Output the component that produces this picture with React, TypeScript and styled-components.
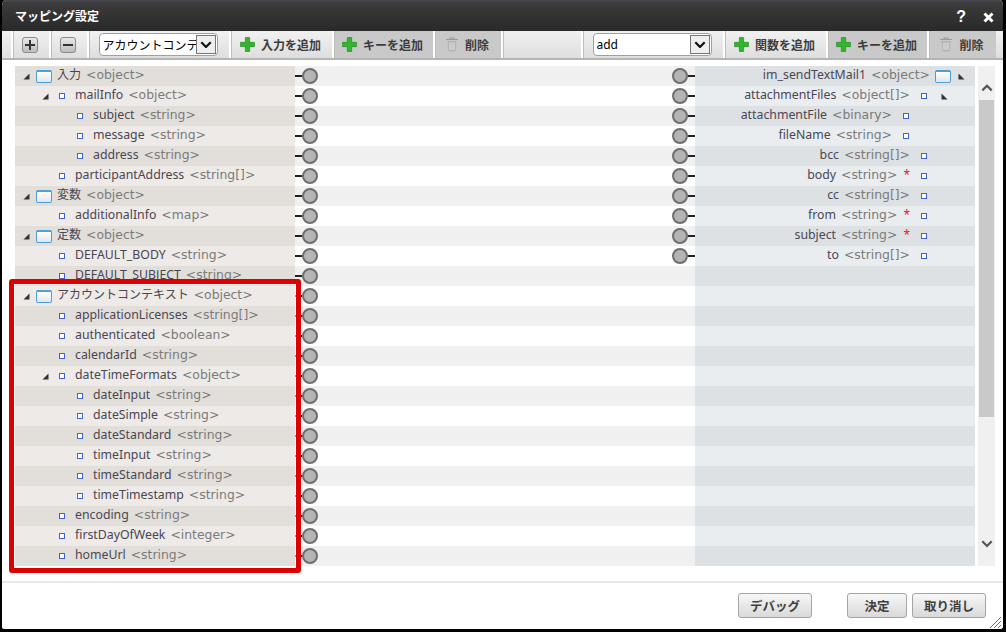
import React from "react";
import styled, { createGlobalStyle } from "styled-components";

const Global = createGlobalStyle`
  html, body { margin: 0; padding: 0; background: #000; }
  * { box-sizing: border-box; }
`;
const FONT = `"Noto Sans", "Noto Sans CJK JP", sans-serif`;

const Win = styled.div`
  position: relative; width: 1006px; height: 632px; background: #fff;
  border: solid #000; border-width: 0 3px 3px 2px; border-radius: 6px 6px 5px 5px;
  display: flex; flex-direction: column; font-family: ${FONT}; overflow: hidden;
`;
const TitleBar = styled.div`
  height: 31px; flex: none; padding: 1px 9px 0 13px; display: flex; align-items: center;
  background: linear-gradient(#3c3c3c, #292929); border-top: 2px solid #44444c; color: #fff;
`;
const Title = styled.div`flex: 1; font-size: 12px; font-weight: 700; margin-bottom: 2px;`;
const Help = styled.span`font: 700 16px "Liberation Sans", sans-serif; margin-right: 17px;`;
const Toolbar = styled.div`
  height: 29px; flex: none; display: flex; align-items: stretch; padding-left: 9px;
  background: linear-gradient(#f1f1f1, #dedede); border-bottom: 2px solid #b4b4b4;
`;
const Cell = styled.div<{ $w: number; $tone?: "dark" | "plain" }>`
  width: ${(p) => p.$w}px; flex: none; display: flex; align-items: center; justify-content: center;
  border-left: 2px solid #fff; padding-right: 2px; font-size: 12px; font-weight: 600; color: #3d3d3d;
  background: ${(p) => (p.$tone === "dark" ? "#c9c9c9" : "transparent")};
  box-shadow: inset 1px 0 0 #bdbdbd;
  gap: 6px;
`;
const Square = styled.div`
  width: 16px; height: 16px; border: 1px solid #8b8b8b; border-radius: 3px;
  background: linear-gradient(#e8e8e8, #bdbdbd); display: flex; align-items: center; justify-content: center;
`;
const SelectBox = styled.div`
  width: 119px; height: 23px; border: 1px solid #a0a0a0; border-radius: 4px; background: #fff;
  display: flex; align-items: center; padding: 0 0 0 3px; font-size: 12px; font-weight: 400; color: #000;
  overflow: hidden;
`;
const SelectText = styled.span`flex: 1; overflow: hidden; white-space: nowrap;`;
const SelectArrow = styled.span`
  width: 20px; height: 19px; flex: none; margin-right: 1px; border: 1px solid #777; background: #eee;
  display: flex; align-items: center; justify-content: center;
`;
const Body = styled.div`
  flex: 1; display: flex; padding: 6px 0 0 13px; border-bottom: 2px solid #e8e8e8;
  min-height: 0;
`;
const Rows = styled.div`width: 960px; flex: none; display: flex; flex-direction: column;`;
const Row = styled.div`display: flex; height: 20px; width: 960px;`;
const LeftCell = styled.div<{ $odd: boolean; $level: number }>`
  width: 280px; flex: none; display: flex; align-items: center;
  padding-left: ${(p) => [8, 27, 45][p.$level]}px;
  background: ${(p) => (p.$odd ? "#e2dfdb" : "#edeae7")};
`;
const RightCell = styled.div<{ $odd: boolean; $level: number }>`
  width: 280px; flex: none; display: flex; align-items: center; justify-content: flex-end;
  padding-right: ${(p) => [10, 27, 45][p.$level]}px;
  background: ${(p) => (p.$odd ? "#dde1e4" : "#e9edf0")};
`;
const Mid = styled.div<{ $odd: boolean }>`
  width: 400px; flex: none; display: flex; align-items: center; justify-content: space-between;
  background: ${(p) => (p.$odd ? "#f0f0f0" : "#fff")};
`;
const Port = styled.span<{ $flip?: boolean }>`
  display: flex; align-items: center; flex-direction: ${(p) => (p.$flip ? "row-reverse" : "row")};
  &::before { content: ""; width: 7px; height: 2px; background: #222; }
`;
const Dot = styled.span`
  width: 16px; height: 16px; border-radius: 50%; border: 2px solid #6e6e6e; background: #b5b5b5;
`;
const Slot = styled.span<{ $w: number; $right?: boolean }>`
  width: ${(p) => p.$w}px; flex: none; display: flex; align-items: center;
  justify-content: ${(p) => (p.$right ? "flex-end" : "flex-start")};
`;
const WinIcon = styled.span<{ $side: "left" | "right" }>`
  width: 16px; height: 13px; flex: none; border: 1px solid #4d9fdc; border-top-width: 2px; border-radius: 2px;
  background: linear-gradient(#ffffff, #dfe6ee);
  margin-${(p) => p.$side}: 5px;
`;
const Bullet = styled.span<{ $side: "left" | "right" }>`
  width: 6px; height: 6px; flex: none; border: 1px solid #3e62d8; background: #fff;
  margin-${(p) => p.$side}: ${(p) => (p.$side === "left" ? 11 : 10)}px;
`;
const Label = styled.span`
  font-size: 12.3px; color: #4a4652; white-space: nowrap; margin-bottom: 4px;
  display: flex; align-items: baseline;
`;
const CjkName = styled.span`font-size: 12px;`;
const Type = styled.span`
  font-family: "DejaVu Sans", sans-serif; font-size: 12.4px; color: #7a7a7a; margin-left: 5px;
`;
const Star = styled.span`color: #e02020; margin-left: 6px; font-size: 12px;`;
const Scroll = styled.div`
  width: 17px; margin-left: 3px; height: 500px; flex: none; background: #f0f0f0;
  display: flex; flex-direction: column; align-items: center;
`;
const ScrollTop = styled.div`
  height: 34px; flex: none; width: 100%; display: flex; align-items: flex-end; justify-content: center; padding-bottom: 8px;
`;
const Thumb = styled.div`height: 317px; flex: none; width: 15px; background: #c9c9c9;`;
const ScrollBottom = styled.div`
  flex: 1; width: 100%; display: flex; align-items: flex-end; justify-content: center; padding-bottom: 18px;
`;
const Footer = styled.div`
  height: 46px; flex: none; display: flex; align-items: flex-start; padding: 10px 17px 0 0; justify-content: flex-end;
`;
const Btn = styled.div<{ $w: number; $ml: number }>`
  width: ${(p) => p.$w}px; margin-left: ${(p) => p.$ml}px; height: 25px; border: 1px solid #a5a5a5; border-radius: 3px;
  background: linear-gradient(#f7f7f7, #d9d9d9); display: flex; align-items: center; justify-content: center;
  font-size: 12.5px; font-weight: 600; color: #3f3f3f;
`;
const Highlight = styled.div`
  position: absolute; left: 7px; top: 279px; width: 292px; height: 294px; border: 5px solid #dc0000;
  border-radius: 3px; box-shadow: inset 0 0 0 1px #fff8;
`;
const Resizer = styled.svg`position: absolute; right: 2px; bottom: 1px;`;

const Plus = () => (
  <svg width="15" height="15" viewBox="0 0 14 14"><path d="M5 0.5h4v4.5h4.500v4H9v4.500H5V9H0.500V5H5z" fill="#35b52f" stroke="#1e8a20" strokeWidth="0.6" /></svg>
);
const Trash = () => (
  <svg width="14" height="15" viewBox="0 0 14 15"><path d="M1 2.500h12M5 2.500V1h4v1.500" stroke="#9a9a9a" strokeWidth="1.200" fill="none" /><path d="M2.500 4h9l-.8 10.500H3.300z" fill="#b5b5b5" /><path d="M5 5.500v7.500M7 5.500v7.500M9 5.500v7.500" stroke="#e2e2e2" strokeWidth="1" /></svg>
);
const Chevron = ({ up, color = "#555", w = 12 }: { up?: boolean; color?: string; w?: number }) => (
  <svg width={w} height={w * 0.64} viewBox="0 0 14 9"><path d={up ? "M1.500 7.500L7 2l5.500 5.500" : "M1.500 1.500L7 7l5.500-5.500"} fill="none" stroke={color} strokeWidth="2.600" /></svg>
);
const Tri = () => (
  <svg width="7" height="7" viewBox="0 0 7 7"><path d="M6.500 .5v6h-6z" fill="#333" /></svg>
);
const TriR = () => (
  <svg width="7" height="7" viewBox="0 0 7 7"><path d="M.5 .5v6h6z" fill="#333" /></svg>
);

type N = { n: string; t: string; l: number; open?: boolean; req?: boolean };
const left: N[] = [
  { n: "入力", t: "object", l: 0, open: true },
  { n: "mailInfo", t: "object", l: 1, open: true },
  { n: "subject", t: "string", l: 2 },
  { n: "message", t: "string", l: 2 },
  { n: "address", t: "string", l: 2 },
  { n: "participantAddress", t: "string[]", l: 1 },
  { n: "変数", t: "object", l: 0, open: true },
  { n: "additionalInfo", t: "map", l: 1 },
  { n: "定数", t: "object", l: 0, open: true },
  { n: "DEFAULT_BODY", t: "string", l: 1 },
  { n: "DEFAULT_SUBJECT", t: "string", l: 1 },
  { n: "アカウントコンテキスト", t: "object", l: 0, open: true },
  { n: "applicationLicenses", t: "string[]", l: 1 },
  { n: "authenticated", t: "boolean", l: 1 },
  { n: "calendarId", t: "string", l: 1 },
  { n: "dateTimeFormats", t: "object", l: 1, open: true },
  { n: "dateInput", t: "string", l: 2 },
  { n: "dateSimple", t: "string", l: 2 },
  { n: "dateStandard", t: "string", l: 2 },
  { n: "timeInput", t: "string", l: 2 },
  { n: "timeStandard", t: "string", l: 2 },
  { n: "timeTimestamp", t: "string", l: 2 },
  { n: "encoding", t: "string", l: 1 },
  { n: "firstDayOfWeek", t: "integer", l: 1 },
  { n: "homeUrl", t: "string", l: 1 },
];
const right: N[] = [
  { n: "im_sendTextMail1", t: "object", l: 0, open: true },
  { n: "attachmentFiles", t: "object[]", l: 1, open: true },
  { n: "attachmentFile", t: "binary", l: 2 },
  { n: "fileName", t: "string", l: 2 },
  { n: "bcc", t: "string[]", l: 1 },
  { n: "body", t: "string", l: 1, req: true },
  { n: "cc", t: "string[]", l: 1 },
  { n: "from", t: "string", l: 1, req: true },
  { n: "subject", t: "string", l: 1, req: true },
  { n: "to", t: "string[]", l: 1 },
];

export default function App() {
  return (
    <Win>
      <Global />
      <TitleBar>
        <Title>マッピング設定</Title>
        <Help>?</Help>
        <svg width="11" height="11" viewBox="0 0 11 11"><path d="M1.500 1.500l8 8M9.500 1.500l-8 8" stroke="#fff" strokeWidth="3" /></svg>
      </TitleBar>
      <Toolbar>
        <Cell $w={38}><Square><svg width="10" height="10" viewBox="0 0 10 10"><path d="M4 0h2v4h4v2H6v4H4V6H0V4h4z" fill="#333" /></svg></Square></Cell>
        <Cell $w={38}><Square><svg width="10" height="10" viewBox="0 0 10 10"><path d="M0 4h10v2H0z" fill="#333" /></svg></Square></Cell>
        <Cell $w={142}>
          <SelectBox>
            <SelectText>アカウントコンテキスト</SelectText>
            <SelectArrow><Chevron color="#111" /></SelectArrow>
          </SelectBox>
        </Cell>
        <Cell $w={103}><Plus />入力を追加</Cell>
        <Cell $w={101} $tone="dark"><Plus />キーを追加</Cell>
        <Cell $w={68} $tone="dark"><Trash />削除</Cell>
        <Cell $w={80} />
        <Cell $w={142}>
          <SelectBox>
            <SelectText>add</SelectText>
            <SelectArrow><Chevron color="#111" /></SelectArrow>
          </SelectBox>
        </Cell>
        <Cell $w={103}><Plus />関数を追加</Cell>
        <Cell $w={101} $tone="dark"><Plus />キーを追加</Cell>
        <Cell $w={69} $tone="dark"><Trash />削除</Cell>
      </Toolbar>
      <Body>
        <Rows>
          {left.map((a, i) => {
            const b = right[i];
            const odd = i % 2 === 0;
            return (
              <Row key={i}>
                <LeftCell $odd={odd} $level={a.l}>
                  <Slot $w={a.l === 0 ? 13 : 17}>{a.open && <Tri />}</Slot>
                  {a.l === 0 ? <WinIcon $side="right" /> : <Bullet $side="right" />}
                  <Label>
                    {a.l === 0 ? <CjkName>{a.n}</CjkName> : a.n}
                    <Type>&lt;{a.t}&gt;</Type>
                  </Label>
                </LeftCell>
                <Mid $odd={odd}>
                  <Port><Dot /></Port>
                  {b && <Port $flip><Dot /></Port>}
                </Mid>
                <RightCell $odd={odd} $level={b ? b.l : 1}>
                  {b && (
                    <>
                      <Label>{b.n}<Type>&lt;{b.t}&gt;</Type>{b.req && <Star>*</Star>}</Label>
                      {b.l === 0 ? <WinIcon $side="left" /> : <Bullet $side="left" />}
                      <Slot $w={b.l === 0 ? 14 : 21} $right>{b.open && <TriR />}</Slot>
                    </>
                  )}
                </RightCell>
              </Row>
            );
          })}
        </Rows>
        <Scroll>
          <ScrollTop><Chevron up /></ScrollTop>
          <Thumb />
          <ScrollBottom><Chevron /></ScrollBottom>
        </Scroll>
      </Body>
      <Footer>
        <Btn $w={74} $ml={0}>デバッグ</Btn>
        <Btn $w={60} $ml={35}>決定</Btn>
        <Btn $w={74} $ml={5}>取り消し</Btn>
      </Footer>
      <Highlight />
      <Resizer width="12" height="12" viewBox="0 0 12 12"><path d="M1 12L12 1M5 12l7-7M9 12l3-3" stroke="#777" strokeWidth="1" /></Resizer>
    </Win>
  );
}
